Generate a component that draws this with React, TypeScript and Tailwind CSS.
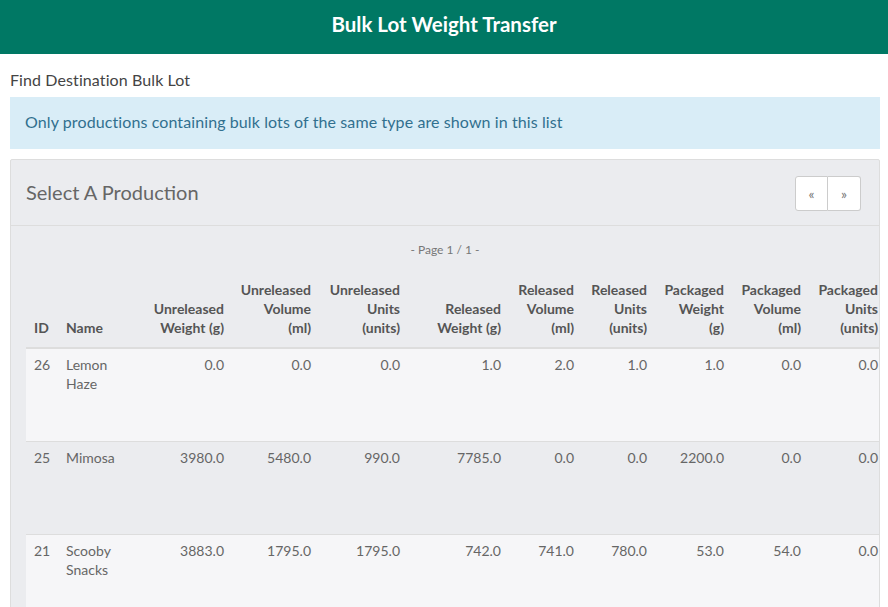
const columns = [
  { label: ["ID"], w: 32, align: "left" },
  { label: ["Name"], w: 86, align: "left" },
  { label: ["Unreleased", "Weight (g)"], w: 88, align: "right" },
  { label: ["Unreleased", "Volume", "(ml)"], w: 87, align: "right" },
  { label: ["Unreleased", "Units", "(units)"], w: 89, align: "right" },
  { label: ["Released", "Weight (g)"], w: 101, align: "right" },
  { label: ["Released", "Volume", "(ml)"], w: 73, align: "right" },
  { label: ["Released", "Units", "(units)"], w: 73, align: "right" },
  { label: ["Packaged", "Weight", "(g)"], w: 77, align: "right" },
  { label: ["Packaged", "Volume", "(ml)"], w: 77, align: "right" },
  { label: ["Packaged", "Units", "(units)"], w: 77, align: "right" },
];

const rows = [
  ["26", "Lemon Haze", "0.0", "0.0", "0.0", "1.0", "2.0", "1.0", "1.0", "0.0", "0.0"],
  ["25", "Mimosa", "3980.0", "5480.0", "990.0", "7785.0", "0.0", "0.0", "2200.0", "0.0", "0.0"],
  ["21", "Scooby Snacks", "3883.0", "1795.0", "1795.0", "742.0", "741.0", "780.0", "53.0", "54.0", "0.0"],
];

export default function App() {
  return (
    <div className="min-h-screen bg-white text-[#444]" style={{ fontFamily: "Lato, 'Open Sans', sans-serif" }}>
      <header className="h-[54px] bg-[#007864] flex items-center justify-center">
        <h1 className="text-white text-[20.5px] font-bold pb-[6px]">Bulk Lot Weight Transfer</h1>
      </header>

      <div className="px-[10px] pr-[8px]">
        <p className="text-[16px] leading-[20px] mt-[16px] mb-[7px] tracking-[0.1px]">Find Destination Bulk Lot</p>

        <div className="bg-[#d9edf7] text-[#31708f] text-[16px] leading-[20px] h-[52px] flex items-center px-[15px] pb-[2px] tracking-[0.1px]">
          Only productions containing bulk lots of the same type are shown in this list
        </div>

        <div className="mt-[10px] border border-[#ddd] rounded-t-[2px] bg-[#ebecef] overflow-hidden">
          <div className="h-[66px] border-b border-[#ddd] flex items-center justify-between pl-[15px] pr-[18px]">
            <h2 className="text-[20px] text-[#666] pb-[2px]">Select A Production</h2>
            <div className="flex h-[35px] mt-[2px]">
              <button className="w-[33px] bg-white border border-[#ccc] rounded-l-[3px] text-[14px] text-[#777]">«</button>
              <button className="w-[33px] bg-white border border-l-0 border-[#ccc] rounded-r-[3px] text-[14px] text-[#777]">»</button>
            </div>
          </div>

          <div className="pt-[15px]">
            <div className="text-center text-[12px] leading-[17px] text-[#777]">- Page 1 / 1 -</div>
            <div className="pl-[15px]">
              <table className="mt-[13px] table-fixed border-collapse w-[860px] text-[14px] leading-[19px]">
                <colgroup>
                  {columns.map((c, i) => (
                    <col key={i} style={{ width: c.w }} />
                  ))}
                </colgroup>
                <thead>
                  <tr className="border-b-2 border-[#ddd] text-[#555]">
                    {columns.map((c, i) => (
                      <th
                        key={i}
                        className={`px-[8px] pt-[9px] pb-[10px] align-bottom font-bold ${c.align === "right" ? "text-right" : "text-left"}`}
                      >
                        {c.label.map((l, j) => (
                          <div key={j} className="whitespace-nowrap">{l}</div>
                        ))}
                      </th>
                    ))}
                  </tr>
                </thead>
                <tbody className="text-[#666]">
                  {rows.map((r, ri) => (
                    <tr key={ri} className={`border-b border-[#ddd] ${ri % 2 === 0 ? "bg-[#f6f6f8]" : "bg-[#ebecef]"}`}>
                      {r.map((v, ci) => (
                        <td
                          key={ci}
                          className={`h-[93px] px-[8px] pt-[6px] align-top ${columns[ci].align === "right" ? "text-right whitespace-nowrap" : "text-left"}`}
                        >
                          {v}
                        </td>
                      ))}
                    </tr>
                  ))}
                </tbody>
              </table>
            </div>
          </div>
        </div>
      </div>
    </div>
  );
}
